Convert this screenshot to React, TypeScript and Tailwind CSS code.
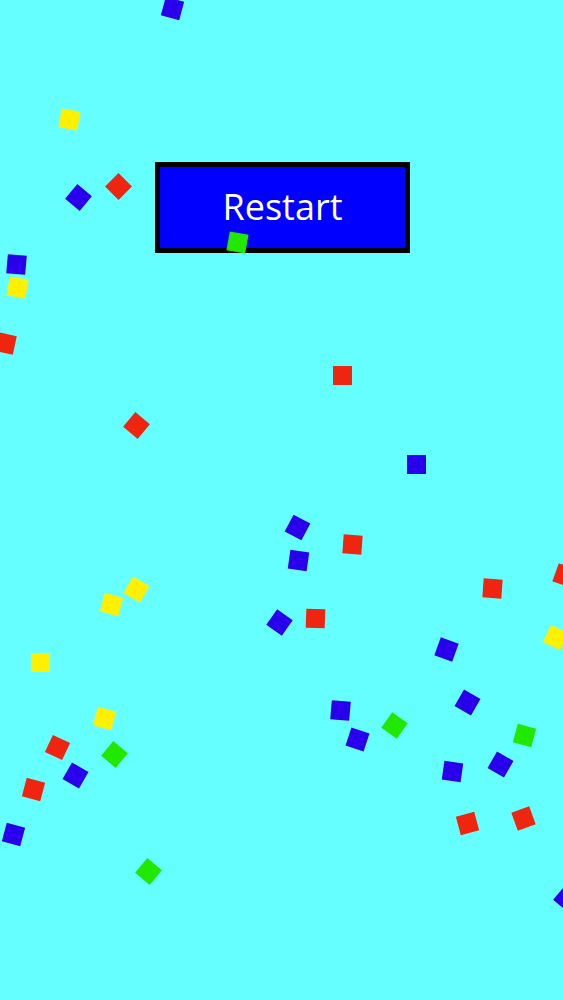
import React from "react";

type C = { x: number; y: number; r: number; c: string };

const B = "#2a00ec";
const R = "#f0250f";
const Y = "#fff000";
const G = "#22e800";

const confetti: C[] = [
  { x: 172, y: 8, r: 15, c: B },
  { x: 69, y: 119, r: 10, c: Y },
  { x: 78, y: 197, r: 40, c: B },
  { x: 118, y: 186, r: 45, c: R },
  { x: 16, y: 264, r: 5, c: B },
  { x: 17, y: 287, r: 10, c: Y },
  { x: 5, y: 343, r: 12, c: R },
  { x: 342, y: 375, r: 0, c: R },
  { x: 136, y: 425, r: 40, c: R },
  { x: 416, y: 464, r: 0, c: B },
  { x: 297, y: 527, r: 28, c: B },
  { x: 352, y: 544, r: 4, c: R },
  { x: 298, y: 560, r: 8, c: B },
  { x: 492, y: 588, r: 4, c: R },
  { x: 564, y: 575, r: 20, c: R },
  { x: 279, y: 622, r: 35, c: B },
  { x: 315, y: 618, r: 2, c: R },
  { x: 555, y: 637, r: 25, c: Y },
  { x: 446, y: 649, r: 20, c: B },
  { x: 467, y: 702, r: 30, c: B },
  { x: 340, y: 710, r: 5, c: B },
  { x: 394, y: 725, r: 35, c: G },
  { x: 357, y: 739, r: 18, c: B },
  { x: 524, y: 735, r: 15, c: G },
  { x: 452, y: 771, r: 8, c: B },
  { x: 500, y: 764, r: 30, c: B },
  { x: 136, y: 589, r: 30, c: Y },
  { x: 111, y: 604, r: 15, c: Y },
  { x: 40, y: 662, r: 0, c: Y },
  { x: 104, y: 718, r: 15, c: Y },
  { x: 57, y: 747, r: 25, c: R },
  { x: 114, y: 754, r: 40, c: G },
  { x: 75, y: 775, r: 30, c: B },
  { x: 33, y: 789, r: 15, c: R },
  { x: 13, y: 834, r: 15, c: B },
  { x: 148, y: 871, r: 40, c: G },
  { x: 467, y: 823, r: -15, c: R },
  { x: 523, y: 818, r: -20, c: R },
  { x: 566, y: 898, r: 40, c: B },
];

export default function App() {
  return (
    <div className="relative w-[563px] h-[1000px] overflow-hidden bg-[#66ffff]">
      <div className="pt-[162px] pl-[155px]">
        <button
          className="w-[255px] h-[91px] border-[5px] border-black bg-[#0000ff] text-white text-[36px] leading-none flex items-center justify-center pb-[2px]"
          style={{ fontFamily: '"Open Sans", "Noto Sans", sans-serif' }}
        >
          Restart
        </button>
      </div>
      {confetti.map((p, i) => (
        <div
          key={i}
          className="absolute w-[19px] h-[19px]"
          style={{
            left: p.x - 9.5,
            top: p.y - 9.5,
            background: p.c,
            transform: `rotate(${p.r}deg)`,
          }}
        />
      ))}
      <div
        className="absolute w-[19px] h-[19px] bg-[#22e800]"
        style={{ left: 237 - 9.5, top: 242 - 9.5, transform: "rotate(10deg)" }}
      />
    </div>
  );
}
